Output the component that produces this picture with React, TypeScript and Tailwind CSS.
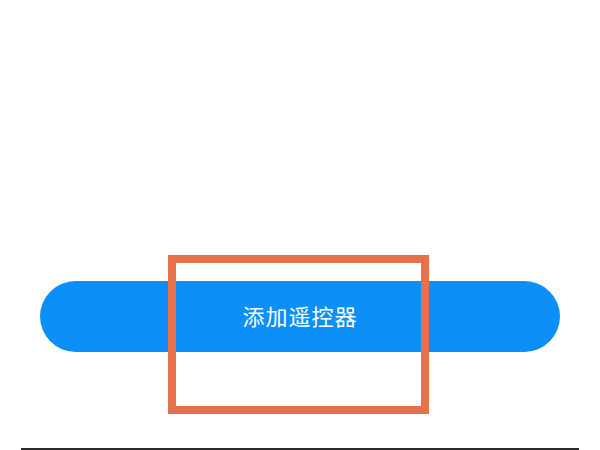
export default function App() {
  return (
    <div className="relative flex h-[450px] w-[600px] flex-col overflow-hidden bg-white">
      <div className="h-[281px]" />

      <button className="mx-[40px] flex h-[71px] items-center justify-center rounded-full bg-[#0c8ff6] pb-[2px] text-[22px] tracking-[1px] text-white font-['Noto_Sans_CJK_SC',sans-serif]">
        添加遥控器
      </button>

      <div className="flex-1" />
      <div className="mx-[21px] h-[2px] bg-[#2a2a2a]" />

      {/* highlight frame drawn over the button */}
      <div className="pointer-events-none absolute left-[168px] top-[255px] h-[159px] w-[261px] border-[8px] border-[#e8714b]" />
    </div>
  );
}
